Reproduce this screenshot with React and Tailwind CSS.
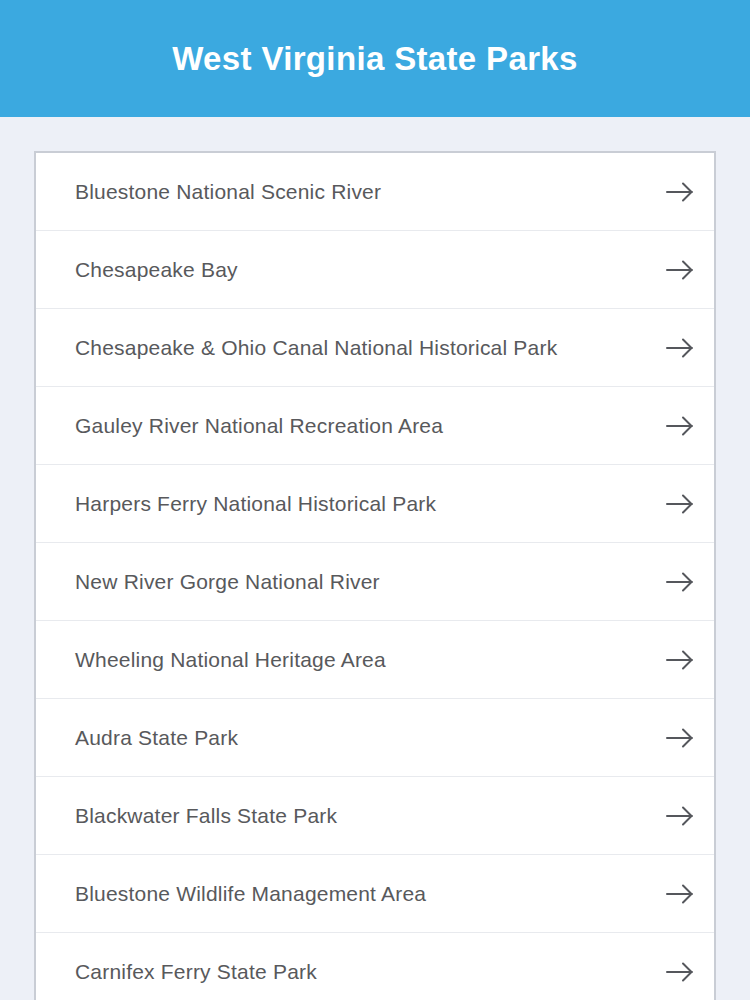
const parks = [
  "Bluestone National Scenic River",
  "Chesapeake Bay",
  "Chesapeake & Ohio Canal National Historical Park",
  "Gauley River National Recreation Area",
  "Harpers Ferry National Historical Park",
  "New River Gorge National River",
  "Wheeling National Heritage Area",
  "Audra State Park",
  "Blackwater Falls State Park",
  "Bluestone Wildlife Management Area",
  "Carnifex Ferry State Park",
];

function ArrowIcon() {
  return (
    <svg width="30" height="24" viewBox="0 0 30 24" fill="none">
      <path
        d="M2 12H27M18 3.5l8.5 8.5-8.5 8.5"
        stroke="#55575c"
        strokeWidth="2"
        strokeLinecap="round"
        strokeLinejoin="round"
      />
    </svg>
  );
}

export default function App() {
  return (
    <div
      className="w-[750px] h-[1000px] overflow-hidden bg-[#edf0f7]"
      style={{ fontFamily: '"Liberation Sans", Arial, sans-serif' }}
    >
      {/* Header */}
      <div className="h-[117px] bg-[#3ba9e0] flex items-center justify-center">
        <h1 className="text-white text-[33px] font-bold tracking-[0.35px]">
          West Virginia State Parks
        </h1>
      </div>

      {/* List */}
      <div className="pt-[34px] px-[34px]">
        <ul className="bg-white border-2 border-[#c9cdd5] border-b-0">
          {parks.map((name) => (
            <li
              key={name}
              className="h-[78px] flex items-center justify-between pl-[39px] pr-[19px] border-b border-[#e8eaee]"
            >
              <span className="text-[21px] tracking-[0.2px] text-[#58595c]">{name}</span>
              <ArrowIcon />
            </li>
          ))}
        </ul>
      </div>
    </div>
  );
}
